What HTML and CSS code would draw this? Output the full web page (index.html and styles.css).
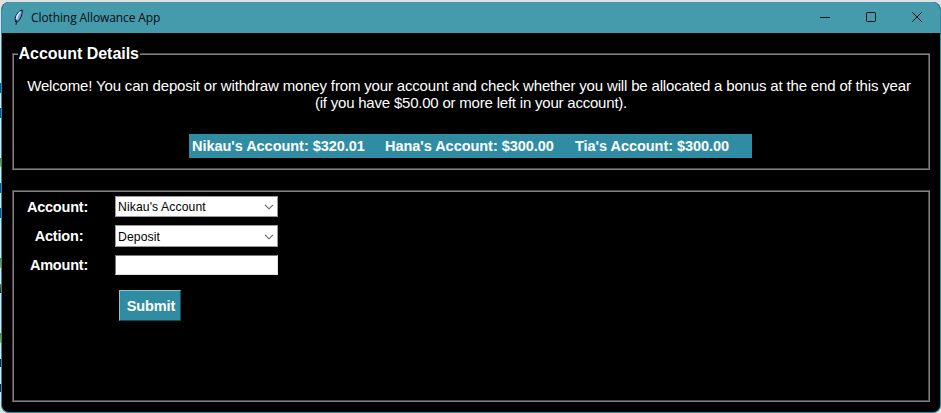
FILE: index.html
```html
<!DOCTYPE html>
<html lang="en">
<head>
<meta charset="utf-8">
<title>Clothing Allowance App</title>
<link rel="stylesheet" href="styles.css">
</head>
<body>
<div class="window">
  <header class="titlebar">
    <svg class="feather" width="12" height="18" viewBox="0 0 12 18">
      <path d="M10.300 2C7 2.500 4 6.500 3.200 10.500L3.500 14H5.500C8.500 11.500 10.500 6.500 10.300 2Z" fill="#6f9fe0" stroke="#0a1626" stroke-width="1"/>
      <path d="M8.300 3.800C6.300 5.500 4.900 8 4.300 11" fill="none" stroke="#e4f1ff" stroke-width="1.400"/>
      <path d="M4.800 12L4 17" fill="none" stroke="#10203a" stroke-width="1"/>
    </svg>
    <h1 class="title">Clothing Allowance App</h1>
    <div class="controls">
      <svg width="10" height="10" viewBox="0 0 10 10"><path d="M0 5.500H10"/></svg>
      <svg width="10" height="10" viewBox="0 0 10 10"><rect x=".5" y=".5" width="9" height="9" rx="1"/></svg>
      <svg width="10" height="10" viewBox="0 0 10 10"><path d="M.2.2L9.800 9.800M9.800.2L.2 9.800"/></svg>
    </div>
  </header>
  <main class="content">
    <section class="frame details">
      <h2 class="legend">Account Details</h2>
      <p class="welcome"><span class="line-one">Welcome! You can deposit or withdraw money from your account and check whether you will be allocated a bonus at the end of this year</span><span class="line-two">(if you have $50.00 or more left in your account).</span></p>
      <div class="balances">
        <span>Nikau's Account: $320.01</span>
        <span>Hana's Account: $300.00</span>
        <span>Tia's Account: $300.00</span>
      </div>
    </section>
    <section class="frame form">
      <div class="label account">Account:</div>
      <div class="field combo">Nikau's Account<svg width="10" height="6" viewBox="0 0 10 6"><path d="M1 .8L5 4.800L9 .8"/></svg></div>
      <div class="label">Action:</div>
      <div class="field combo second">Deposit<svg width="10" height="6" viewBox="0 0 10 6"><path d="M1 .8L5 4.800L9 .8"/></svg></div>
      <div class="label">Amount:</div>
      <input class="field entry" type="text" aria-label="Amount">
      <button class="submit">Submit</button>
    </section>
  </main>
</div>
</body>
</html>
```
FILE: styles.css
```css
* { box-sizing: border-box; }
body {
  margin: 0;
  width: 941px;
  height: 413px;
  padding: 2px 0 0 1px;
  overflow: hidden;
  background:
    linear-gradient(#0d55a5, #0d55a5) 0 83px / 1px 10px no-repeat,
    linear-gradient(#0d55a5, #0d55a5) 0 108px / 1px 10px no-repeat,
    linear-gradient(#3c8f28, #c8a020) 0 158px / 1px 9px no-repeat,
    linear-gradient(#0d55a5, #0d55a5) 0 183px / 1px 10px no-repeat,
    linear-gradient(#0d55a5, #0d55a5) 0 208px / 1px 10px no-repeat,
    linear-gradient(#3c8f28, #c8a020) 0 258px / 1px 10px no-repeat,
    linear-gradient(#a06020, #401010) 0 284px / 1px 9px no-repeat,
    linear-gradient(#3c8f28, #c8a020) 0 333px / 1px 10px no-repeat,
    linear-gradient(#301828, #203060) 0 359px / 1px 8px no-repeat,
    linear-gradient(#301828, #203060) 0 384px / 1px 8px no-repeat,
    #dfe1e2;
  font-family: "Liberation Sans", Arial, sans-serif;
  color: #fff;
}
.window {
  display: flex;
  flex-direction: column;
  height: 411px;
  border: 1px solid #2f8ca2;
  border-top: 0;
  border-radius: 8px;
  overflow: hidden;
  background: #000;
}
.titlebar {
  display: flex;
  align-items: center;
  flex: none;
  height: 31px;
  margin: 0 -1px;
  padding: 0 19px 0 11px;
  background: #459aac;
  color: #050d10;
}
.feather { margin-top: -2px; }
.title {
  margin: 0 auto 0 7px;
  font: 400 12px/18px "Open Sans", "Noto Sans", sans-serif;
  letter-spacing: -.1px;
  white-space: nowrap;
}
.controls { display: flex; gap: 36px; margin-top: -1px; }
.controls svg { fill: none; stroke: #050d10; stroke-width: 1; }
.content { flex: 1; padding: 20px 9px 10px 10px; }
.frame {
  width: 918px;
  border: 1px solid;
  border-color: #4b4b4b #808080 #808080 #4b4b4b;
  box-shadow: inset 1px 1px #808080, inset -1px -1px #4b4b4b;
}
.details { height: 117px; text-align: center; }
.legend {
  width: 122px;
  margin: -10px 0 0 5px;
  padding-left: .6px;
  background: #000;
  font-size: 16px;
  line-height: 20px;
  letter-spacing: -.04px;
  text-align: left;
  white-space: nowrap;
}
.welcome {
  margin: 13px 0 0;
  font-size: 15px;
  line-height: 17px;
  white-space: nowrap;
}
.line-one, .line-two { display: block; }
.line-one { padding-right: 4px; letter-spacing: -.164px; }
.line-two { letter-spacing: -.21px; }
.balances {
  display: flex;
  width: 563px;
  height: 24px;
  margin: 23px 0 0 176px;
  padding-left: 3px;
  background: #2f8ca2;
  font-size: 14.5px;
  font-weight: 700;
  line-height: 24px;
  letter-spacing: -.04px;
  text-align: left;
  white-space: nowrap;
}
.balances span:nth-child(1) { width: 193px; }
.balances span:nth-child(2) { width: 190px; }
.form {
  display: grid;
  grid-template-columns: 102px 163px;
  grid-template-rows: 30px 29px 35px 31px;
  align-content: start;
  height: 212px;
  margin-top: 20px;
  padding-top: 5px;
}
.label {
  width: 92px;
  font-size: 14.5px;
  font-weight: 700;
  line-height: 21px;
  letter-spacing: -.2px;
  text-align: center;
}
.label.account { width: 89px; line-height: 22px; }
.field {
  width: 163px;
  height: 21px;
  border: 1px solid;
  border-color: #7a7a7a #e3e3e3 #e3e3e3 #7a7a7a;
  background: #fff;
  color: #000;
}
.combo {
  display: flex;
  align-items: center;
  justify-content: space-between;
  padding: 0 3px 0 2px;
  border-color: #999;
  font-size: 12.2px;
  letter-spacing: .1px;
}
.combo.second { height: 22px; margin-top: -1px; padding-top: 1px; }
.combo svg { fill: none; stroke: #606060; stroke-width: 1.100; }
.entry { height: 20px; border-radius: 0; padding: 0 2px; outline: 0; }
.submit {
  grid-column: 2;
  width: 62px;
  height: 31px;
  margin-left: 4px;
  padding: 1px 0 0 2px;
  border: 1px solid;
  border-color: #8bc5d2 #174955 #174955 #8bc5d2;
  border-radius: 0;
  background: #2f8ca2;
  color: #fff;
  font: 700 14.5px/28px "Liberation Sans", Arial, sans-serif;
  letter-spacing: -.1px;
}
```
